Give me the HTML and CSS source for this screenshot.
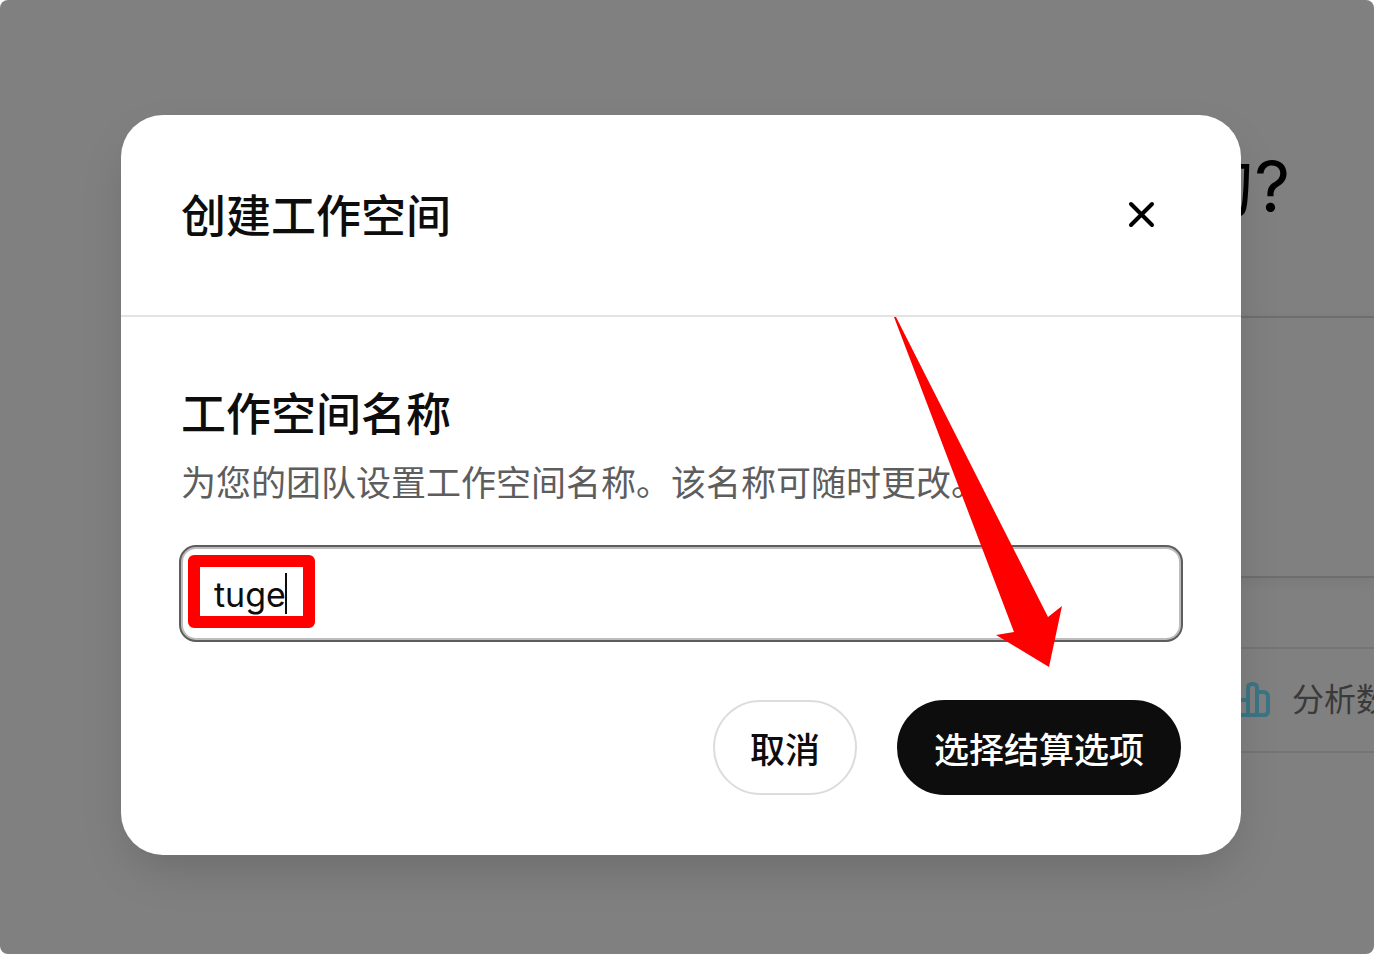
FILE: index.html
```html
<!DOCTYPE html>
<html lang="zh-CN">
<head>
    <meta charset="UTF-8">
    <meta name="viewport" content="width=device-width, initial-scale=1.0">
    <title>创建工作空间</title>
    <link rel="stylesheet" href="styles.css">
</head>
<body>
    <div class="screen">
        <main class="page">
            <h1 class="page-title">的?</h1>
            <div class="composer"></div>
            <ul class="suggestions">
                <li class="suggestion">
                    <svg class="chart-icon" viewBox="0 0 38 36" fill="none" stroke="currentColor" stroke-width="4" stroke-linejoin="round" stroke-linecap="round">
                        <path d="M14 33V6q0-4 4-4h1q4 0 4 4v27"/>
                        <path d="M23 10h6q5 0 5 5v14q0 4-4 4H6q-4 0-4-4V22q0-4 4-4h8"/>
                    </svg>
                    <span>分析数</span>
                </li>
            </ul>
        </main>

        <div class="overlay">
            <section class="modal" role="dialog" aria-labelledby="modalTitle">
                <header class="modal-header">
                    <h2 id="modalTitle">创建工作空间</h2>
                    <button class="close-btn" type="button" aria-label="关闭">
                        <svg viewBox="0 0 28 28" fill="none" stroke="currentColor" stroke-width="4" stroke-linecap="round">
                            <path d="M4 3l21 21M25 3L4 24"/>
                        </svg>
                    </button>
                </header>

                <form class="modal-body">
                    <label for="workspaceName">工作空间名称</label>
                    <p class="hint">为您的团队设置工作空间名称。该名称可随时更改。</p>
                    <div class="field">
                        <input type="text" id="workspaceName" value="tuge">
                        <span class="highlight"></span>
                        <span class="caret"></span>
                    </div>
                    <div class="actions">
                        <button class="btn" type="button">取消</button>
                        <button class="btn btn-primary" type="submit">选择结算选项</button>
                    </div>
                </form>

                <svg class="arrow" viewBox="0 0 169 350" aria-hidden="true">
                    <path d="M0 0h2L154 300L168 289L155 350L102 318L120 315Z"/>
                </svg>
            </section>
        </div>
    </div>
</body>
</html>
```
FILE: styles.css
```css
* {
    box-sizing: border-box;
}

body {
    margin: 0;
    background-color: #fff;
    color: #0d0d0d;
    font-family: Inter, "Noto Sans CJK SC", sans-serif;
}

h1, h2, p, ul {
    margin: 0;
    padding: 0;
}

button, input {
    font-family: inherit;
    color: inherit;
}

.screen {
    position: relative;
    min-height: 100vh;
    border-radius: 8px;
    overflow: hidden;
    background-color: #808080;
}

/* page behind the dialog */
.page {
    padding-top: 137px;
}

.page-title {
    padding-right: 84px;
    color: #000;
    font-size: 70px;
    font-weight: 400;
    line-height: 100px;
    text-align: right;
}

.composer {
    height: 262px;
    margin-top: 79px;
    margin-left: 20%;
    border: 2px solid #6e6e6e;
    border-right: none;
    box-shadow: 0 4px 12px rgba(0, 0, 0, 0.06);
}

.suggestions {
    margin-top: 69px;
    margin-left: 20%;
    list-style: none;
    border-top: 2px solid #747474;
    border-bottom: 2px solid #747474;
}

.suggestion {
    display: flex;
    align-items: center;
    gap: 20px;
    width: 140px;
    height: 102px;
    margin-left: auto;
    color: #3a3a3a;
    font-size: 32px;
    font-weight: 400;
    line-height: 40px;
    white-space: nowrap;
}

.chart-icon {
    flex: none;
    width: 38px;
    height: 36px;
    color: #3b7585;
}

/* dialog */
.overlay {
    position: absolute;
    inset: 0;
    padding: 115px 133px 99px 121px;
}

.modal {
    position: relative;
    border-radius: 42px;
    background-color: #fff;
    box-shadow: 0 20px 48px -10px rgba(0, 0, 0, 0.18);
}

.modal-header {
    display: flex;
    align-items: center;
    justify-content: space-between;
    height: 202px;
    padding: 0 60px;
    border-bottom: 2px solid #e3e3e3;
}

.modal-header h2 {
    padding-top: 4px;
}

.modal-header h2,
.modal-body label {
    font-size: 45px;
    font-weight: 500;
    line-height: 60px;
}

.close-btn {
    display: flex;
    align-items: center;
    justify-content: center;
    width: 80px;
    height: 80px;
    padding: 0;
    border: none;
    background: none;
    color: #000;
    cursor: pointer;
}

.close-btn svg {
    width: 28px;
    height: 28px;
}

.modal-body {
    padding: 68px 60px 60px;
}

.modal-body label {
    display: block;
}

.hint {
    margin-top: 13px;
    color: #5d5d5d;
    font-size: 35px;
    font-weight: 400;
    line-height: 50px;
}

.field {
    position: relative;
    margin-top: 39px;
}

.field input {
    display: block;
    width: 100%;
    height: 93px;
    padding: 2px 31px 0;
    border: 2px solid #bdbdbd;
    border-radius: 15px;
    outline: none;
    box-shadow: 0 0 0 2px #5d5d5d;
    font-size: 34px;
}

.highlight {
    position: absolute;
    top: 8px;
    left: 7px;
    width: 127px;
    height: 73px;
    border: 12px solid #f00;
    border-radius: 6px;
    pointer-events: none;
}

.caret {
    position: absolute;
    top: 26px;
    left: 104px;
    width: 2px;
    height: 41px;
    background-color: #0d0d0d;
}

.actions {
    display: flex;
    justify-content: flex-end;
    gap: 40px;
    margin-top: 60px;
}

.btn {
    height: 95px;
    padding: 0 35px;
    border: 2px solid #dcdcdc;
    border-radius: 48px;
    background-color: #fff;
    font-size: 35px;
    font-weight: 500;
    cursor: pointer;
}

.btn-primary {
    border-color: #0d0d0d;
    background-color: #0d0d0d;
    color: #fff;
}

.arrow {
    position: absolute;
    top: 202px;
    right: 178px;
    width: 169px;
    height: 350px;
    fill: #f00;
    pointer-events: none;
}
```
